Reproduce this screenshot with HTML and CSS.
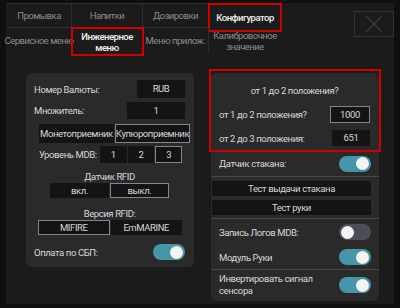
FILE: index.html
```html
<!DOCTYPE html>
<html lang="ru">
<head>
  <meta charset="UTF-8">
  <title>Конфигуратор</title>
  <link rel="stylesheet" href="styles.css">
</head>
<body>
  <div class="top"></div>
  <div class="screen">
    <div class="bar">
      <div class="tabs">
        <div class="tab">Промывка</div>
        <div class="tab">Напитки</div>
        <div class="tab">Дозировки</div>
        <div class="tab active mark">Конфигуратор</div>
        <div class="tab">Сервисное меню</div>
        <div class="tab active mark">Инженерное меню</div>
        <div class="tab">Меню прилож.</div>
        <div class="tab wrap">Калибровочное значение</div>
      </div>
      <div class="close">
        <svg width="22" height="18" viewBox="0 0 22 18"><path d="M3 1 L19 17 M19 1 L3 17" stroke="#3a3a3a" stroke-width="1.2"/></svg>
      </div>
    </div>

    <div class="content">
      <div class="panel left">
        <div class="row r1">
          <span>Номер Валюты:</span>
          <span class="box w48">RUB</span>
        </div>
        <div class="row r2">
          <span>Множитель:</span>
          <span class="box w58">1</span>
        </div>
        <div class="seg s1">
          <span>Монетоприемник</span>
          <span class="on">Купюроприемник</span>
        </div>
        <div class="row mdb">
          <span>Уровень MDB:</span>
          <div class="seg s2">
            <span>1</span>
            <span>2</span>
            <span class="on">3</span>
          </div>
        </div>
        <div class="title t1">Датчик RFID</div>
        <div class="seg s3">
          <span>вкл.</span>
          <span class="on">выкл.</span>
        </div>
        <div class="title t2">Версия RFID:</div>
        <div class="seg s4">
          <span class="on">MIFIRE</span>
          <span>EmMARINE</span>
        </div>
        <div class="row sbp">
          <span>Оплата по СБП:</span>
          <span class="toggle"></span>
        </div>
      </div>

      <div class="panel right">
        <div class="calib">
          <div class="title">от 1 до 2 положения?</div>
          <div class="row">
            <span>от 1 до 2 положения?</span>
            <span class="box w40 on">1000</span>
          </div>
          <div class="row">
            <span>от 2 до 3 положения:</span>
            <span class="box w38">651</span>
          </div>
        </div>
        <div class="row line">
          <span>Датчик стакана:</span>
          <span class="toggle"></span>
        </div>
        <div class="btns">
          <div class="btn">Тест выдачи стакана</div>
          <div class="btn">Тест руки</div>
        </div>
        <div class="row">
          <span>Запись Логов MDB:</span>
          <span class="toggle off"></span>
        </div>
        <div class="row line short">
          <span>Модуль Руки</span>
          <span class="toggle"></span>
        </div>
        <div class="row last">
          <span>Инвертировать сигнал<br>сенсора</span>
          <span class="toggle"></span>
        </div>
      </div>
    </div>
  </div>
</body>
</html>
```

FILE: styles.css
```css
*{
  margin: 0;
  padding: 0;
  box-sizing: border-box;
}
body{
  background-color: #0f0f0f;
  font-family: Roboto, "Noto Sans CJK SC", sans-serif;
  font-size: 9.5px;
  letter-spacing: -0.4px;
  color: #d8d8d8;
  width: 400px;
  height: 308px;
  overflow: hidden;
  white-space: nowrap;
}
.top{
  height: 3px;
}
.screen{
  margin: 0 6px;
  height: 301px;
  background-color: #1b1b1b;
}
.bar{
  display: flex;
  align-items: flex-start;
}
.tabs{
  margin-left: 1px;
  display: grid;
  grid-template-columns: 65px 71px 66px 72px;
  grid-template-rows: 24px 25px;
  border-top: 1px solid #2e2e2e;
}
.tab{
  display: flex;
  align-items: center;
  justify-content: center;
  text-align: center;
  line-height: 11px;
  color: #8c8c8c;
  border-right: 1px solid #2e2e2e;
  border-bottom: 1px solid #2e2e2e;
  padding: 0;
  letter-spacing: -0.5px;
}
.tab.wrap{
  white-space: normal;
}
.tab:nth-child(4), .tab:nth-child(8){
  border-right: none;
}
.tab:nth-child(n+5){
  border-bottom: none;
}
.tab.active{
  color: #f0f0f0;
  font-weight: 500;
  white-space: normal;
  padding: 0 10px;
}
.mark{
  outline: 2px solid #d10000;
  outline-offset: -1px;
}
.tab:nth-child(4){
  height: 27px;
}
.tab:nth-child(6){
  height: 27px;
}
.close{
  margin: 8px 0 0 auto;
  width: 40px;
  height: 26px;
  border: 1px solid #343434;
  display: flex;
  align-items: center;
  justify-content: center;
}
.content{
  display: flex;
  align-items: flex-start;
  padding: 20px 0 0 20px;
  gap: 17px;
}
.panel{
  background-color: #2a2a2a;
  border-radius: 6px;
}
.left{
  width: 168px;
  height: 194px;
  padding: 7px 9px 0 8px;
  display: flex;
  flex-direction: column;
}
.row{
  display: flex;
  align-items: center;
  justify-content: space-between;
}
.box{
  background-color: #141414;
  text-align: center;
  height: 18px;
  line-height: 16px;
  border: 1px solid #141414;
}
.box.on{
  border-color: #7d879b;
}
.w48{ width: 48px; }
.w58{ width: 58px; height: 17px; line-height: 15px; }
.w40{ width: 40px; height: 17px; line-height: 15px; }
.w38{ width: 38px; height: 16px; line-height: 14px; }
.r1{
  height: 18px;
}
.r2{
  height: 17px;
  margin-top: 4px;
}
.seg{
  display: flex;
}
.seg span{
  flex: 1;
  text-align: center;
  background-color: #141414;
  border: 1px solid #141414;
}
.seg span + span{
  margin-left: 1px;
}
.seg .on{
  border-color: #7d879b;
}
.s1{
  margin: 5px 3px 0 5px;
}
.s1 span{
  height: 19px;
  line-height: 17px;
}
.mdb{
  height: 17px;
  margin: 3px 3px 0 5px;
}
.s2{
  width: 82px;
}
.s2 span{
  height: 17px;
  line-height: 15px;
}
.title{
  text-align: center;
  height: 12px;
  line-height: 12px;
}
.t1{
  margin-top: 8px;
}
.t2{
  margin-top: 10px;
}
.s3{
  width: 119px;
  margin: 0 auto;
}
.s3 span, .s4 span{
  height: 15px;
  line-height: 13px;
}
.s4{
  margin: 0 3px 0 4px;
}
.sbp{
  margin-top: 9px;
  height: 16px;
}
.toggle{
  width: 32px;
  height: 16px;
  border-radius: 8px;
  background-color: #4795a9;
  display: flex;
  align-items: center;
  justify-content: flex-end;
  padding: 0 2px;
}
.toggle::after{
  content: "";
  width: 13px;
  height: 13px;
  border-radius: 50%;
  background-color: #f4f4f4;
}
.toggle.off{
  background-color: #4a4e56;
  justify-content: flex-start;
}
.right{
  width: 168px;
  height: 228px;
}
.calib{
  position: relative;
  height: 78px;
  padding: 12px 9px 0 8px;
}
/* red highlight frame drawn over the block */
.calib::after{
  content: "";
  position: absolute;
  top: -4px;
  left: -2px;
  right: -2px;
  bottom: -1px;
  border: 2px solid #d10000;
}
.calib .row:nth-child(2){
  margin-top: 9px;
}
.calib .row:nth-child(3){
  margin-top: 7px;
}
.right > .row{
  padding: 0 8px;
  height: 26px;
}
.right > .row.short{
  height: 25px;
}
.line{
  border-bottom: 1px solid #474747;
}
.btns{
  padding: 4px 8px 3px 1px;
  border-bottom: 1px solid #474747;
}
.btn{
  background-color: #141414;
  height: 15px;
  line-height: 15px;
  text-align: center;
}
.btn + .btn{
  margin-top: 4px;
}
.right > .row.last{
  height: 30px;
  line-height: 12px;
}
```
